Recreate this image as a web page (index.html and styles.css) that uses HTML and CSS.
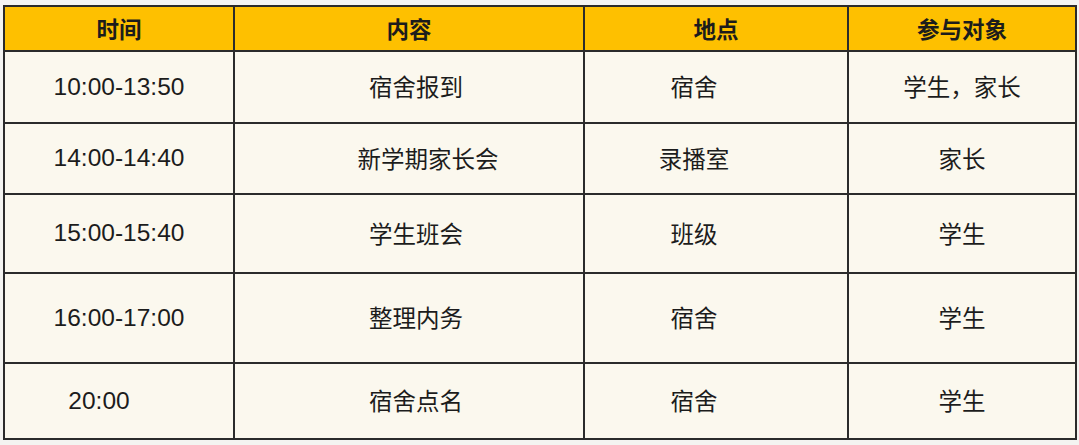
FILE: index.html
```html
<!DOCTYPE html>
<html lang="zh-CN">
<head>
<meta charset="utf-8">
<title>日程安排</title>
<link rel="stylesheet" href="styles.css">
</head>
<body>
<table class="schedule">
  <colgroup>
    <col class="c-time">
    <col class="c-content">
    <col class="c-place">
    <col class="c-who">
  </colgroup>
  <thead>
    <tr class="head">
      <th>时间</th>
      <th>内容</th>
      <th>地点</th>
      <th>参与对象</th>
    </tr>
  </thead>
  <tbody>
    <tr class="r1">
      <td class="time">10:00-13:50</td>
      <td class="content">宿舍报到</td>
      <td class="place">宿舍</td>
      <td>学生，家长</td>
    </tr>
    <tr class="r2">
      <td class="time">14:00-14:40</td>
      <td class="content wide">新学期家长会</td>
      <td class="place">录播室</td>
      <td>家长</td>
    </tr>
    <tr class="r3">
      <td class="time">15:00-15:40</td>
      <td class="content">学生班会</td>
      <td class="place">班级</td>
      <td>学生</td>
    </tr>
    <tr class="r4">
      <td class="time">16:00-17:00</td>
      <td class="content">整理内务</td>
      <td class="place">宿舍</td>
      <td>学生</td>
    </tr>
    <tr class="r5">
      <td class="time short">20:00</td>
      <td class="content">宿舍点名</td>
      <td class="place">宿舍</td>
      <td>学生</td>
    </tr>
  </tbody>
</table>
</body>
</html>
```

FILE: styles.css
```css
html, body {
  margin: 0;
  background: #f4f4f1;
}

body {
  padding: 5px 0 0 3px;
  font-family: "Liberation Sans", "Noto Sans CJK SC", sans-serif;
  color: #1c1c1c;
}

.schedule {
  border-collapse: collapse;
  table-layout: fixed;
  width: 1072px;
  background: #fbf8ee;
  font-size: 24px;
}

.c-time { width: 230px; }
.c-content { width: 350px; }
.c-place { width: 264px; }
.c-who { width: 228px; }

.schedule th,
.schedule td {
  border: 2px solid #2b2b2b;
  text-align: center;
  vertical-align: middle;
  padding: 0;
  line-height: 1;
}

.schedule th {
  background: #fec000;
  font-family: "Noto Sans CJK SC", sans-serif;
  font-weight: 700;
  font-size: 22.5px;
}

.head { height: 45px; }
.r1 { height: 72px; }
.r2 { height: 71px; }
.r3 { height: 79px; }
.r4 { height: 90px; }
.r5 { height: 76px; }

.schedule td {
  font-family: "Noto Sans CJK SC", sans-serif;
  font-size: 23.5px;
}

.schedule td.time {
  font-family: "Liberation Sans", sans-serif;
  font-size: 24.5px;
}

.schedule td.time.short {
  padding-right: 40px;
}

.schedule td.content {
  padding-left: 14px;
}

.schedule td.content.wide {
  padding-left: 38px;
}

.schedule td.place {
  padding-right: 44px;
}
```
